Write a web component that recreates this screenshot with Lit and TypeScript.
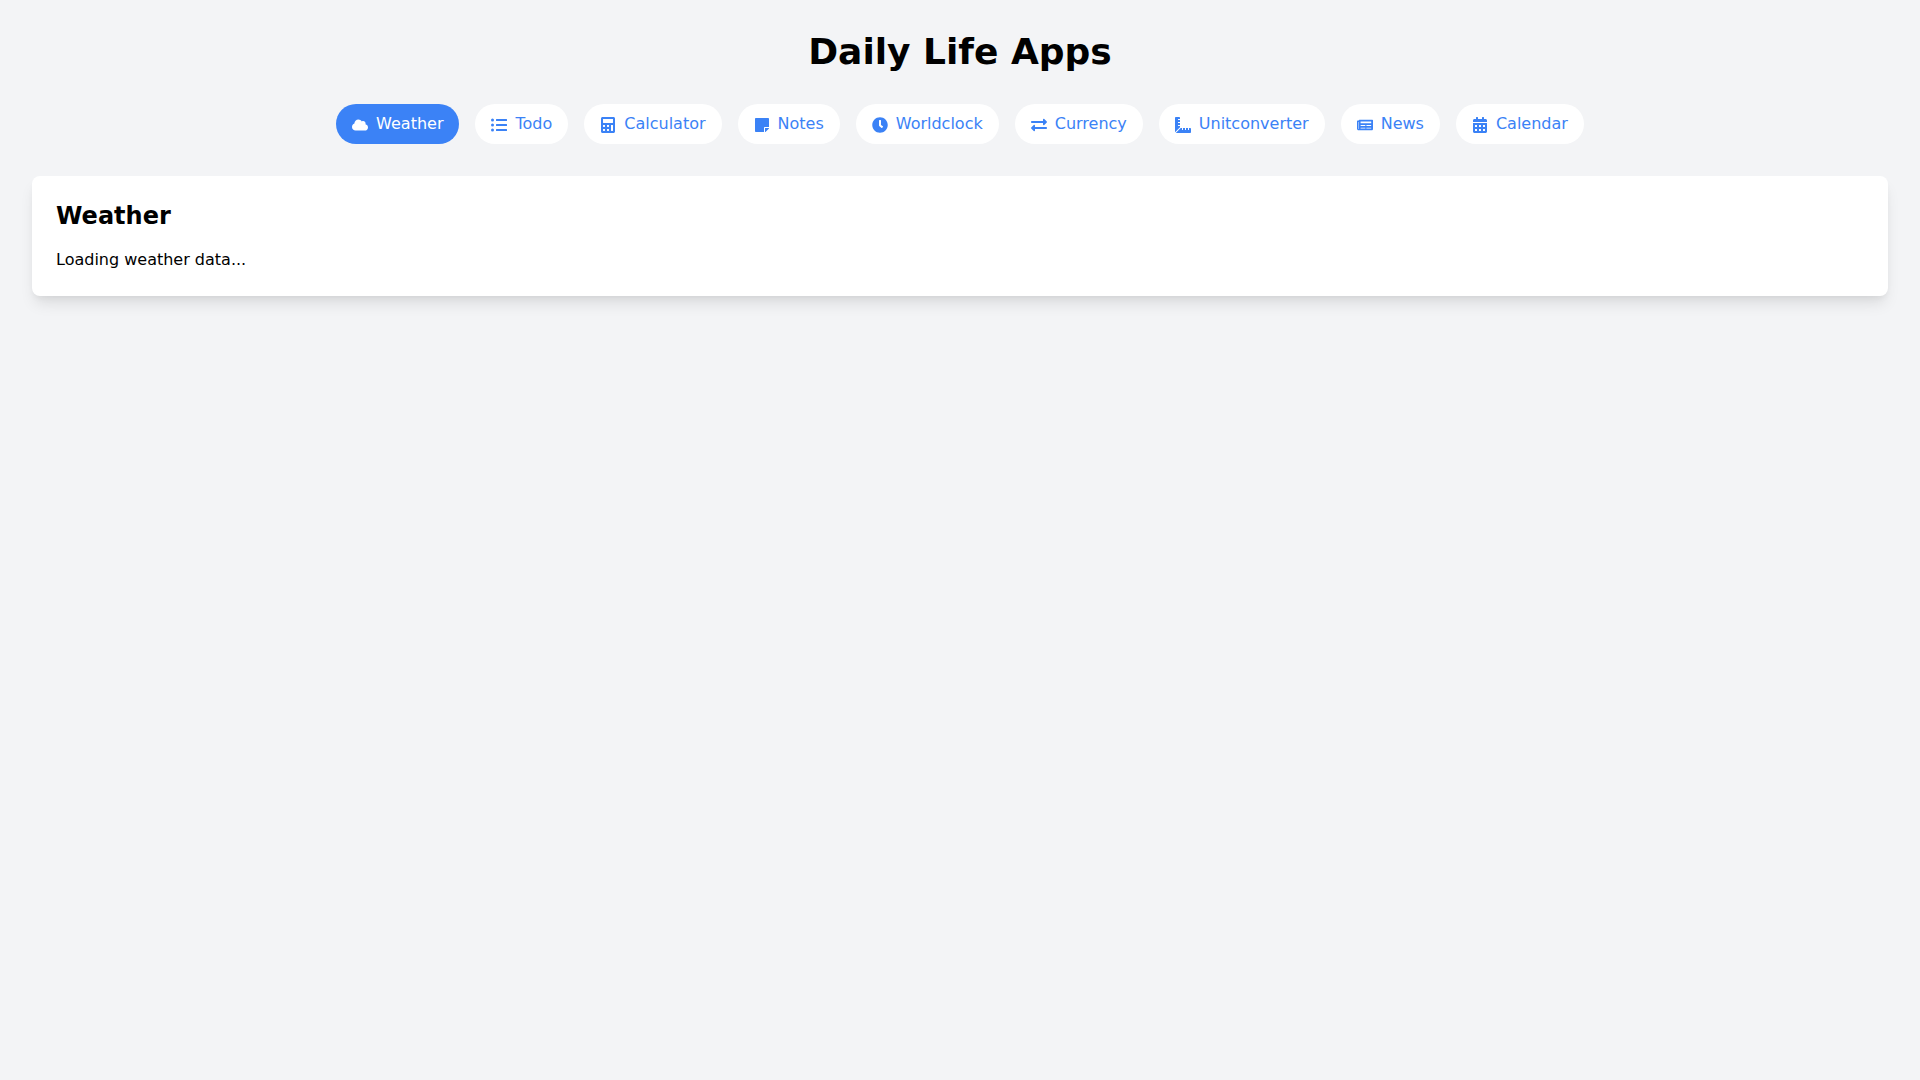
import { LitElement, html, css, svg } from "lit";
import { customElement, state } from "lit/decorators.js";

type Tab = { name: string; label: string; width: number; path: string };

const TABS: Tab[] = [
  {
    name: "weather",
    label: "Weather",
    width: 640,
    path: "M537.6 226.6c4.1-10.7 6.4-22.4 6.4-34.6 0-53-43-96-96-96-19.7 0-38.1 6-53.3 16.2C367 64.2 315.3 32 256 32c-88.4 0-160 71.6-160 160 0 2.7.1 5.4.2 8.1C40.2 219.8 0 273.2 0 336c0 79.5 64.5 144 144 144h368c70.7 0 128-57.3 128-128 0-61.9-44-113.6-102.4-125.4z",
  },
  {
    name: "todo",
    label: "Todo",
    width: 512,
    path: "M48 48a48 48 0 1 0 48 48 48 48 0 0 0-48-48zm0 160a48 48 0 1 0 48 48 48 48 0 0 0-48-48zm0 160a48 48 0 1 0 48 48 48 48 0 0 0-48-48zm448 16H176a16 16 0 0 0-16 16v32a16 16 0 0 0 16 16h320a16 16 0 0 0 16-16v-32a16 16 0 0 0-16-16zm0-320H176a16 16 0 0 0-16 16v32a16 16 0 0 0 16 16h320a16 16 0 0 0 16-16V80a16 16 0 0 0-16-16zm0 160H176a16 16 0 0 0-16 16v32a16 16 0 0 0 16 16h320a16 16 0 0 0 16-16v-32a16 16 0 0 0-16-16z",
  },
  {
    name: "calculator",
    label: "Calculator",
    width: 448,
    path: "M400 0H48C22.4 0 0 22.4 0 48v416c0 25.6 22.4 48 48 48h352c25.6 0 48-22.4 48-48V48c0-25.6-22.4-48-48-48zM128 435.2c0 6.4-6.4 12.8-12.8 12.8H76.8c-6.4 0-12.8-6.4-12.8-12.8v-38.4c0-6.4 6.4-12.8 12.8-12.8h38.4c6.4 0 12.8 6.4 12.8 12.8v38.4zm0-128c0 6.4-6.4 12.8-12.8 12.8H76.8c-6.4 0-12.8-6.4-12.8-12.8v-38.4c0-6.4 6.4-12.8 12.8-12.8h38.4c6.4 0 12.8 6.4 12.8 12.8v38.4zm128 128c0 6.4-6.4 12.8-12.8 12.8h-38.4c-6.4 0-12.8-6.4-12.8-12.8v-38.4c0-6.4 6.4-12.8 12.8-12.8h38.4c6.4 0 12.8 6.4 12.8 12.8v38.4zm0-128c0 6.4-6.4 12.8-12.8 12.8h-38.4c-6.4 0-12.8-6.4-12.8-12.8v-38.4c0-6.4 6.4-12.8 12.8-12.8h38.4c6.4 0 12.8 6.4 12.8 12.8v38.4zm128 128c0 6.4-6.4 12.8-12.8 12.8h-38.4c-6.4 0-12.8-6.4-12.8-12.8V268.8c0-6.4 6.4-12.8 12.8-12.8h38.4c6.4 0 12.8 6.4 12.8 12.8v166.4zm0-256c0 6.4-6.4 12.8-12.8 12.8H76.8c-6.4 0-12.8-6.4-12.8-12.8V76.8C64 70.4 70.4 64 76.8 64h294.4c6.4 0 12.8 6.4 12.8 12.8v102.4z",
  },
  {
    name: "notes",
    label: "Notes",
    width: 448,
    path: "M312 320h136V56c0-13.3-10.7-24-24-24H24C10.7 32 0 42.7 0 56v400c0 13.3 10.7 24 24 24h264V344c0-13.2 10.8-24 24-24zm129 55l-98 98c-4.5 4.5-10.6 7-17 7h-6V352h128v6.1c0 6.3-2.5 12.4-7 16.9z",
  },
  {
    name: "worldclock",
    label: "Worldclock",
    width: 512,
    path: "M256,8C119,8,8,119,8,256S119,504,256,504,504,393,504,256,393,8,256,8Zm92.49,313h0l-20,25a16,16,0,0,1-22.49,2.5h0l-67-49.72a40,40,0,0,1-15-31.23V112a16,16,0,0,1,16-16h32a16,16,0,0,1,16,16V256l58,42.5A16,16,0,0,1,348.49,321Z",
  },
  {
    name: "currency",
    label: "Currency",
    width: 512,
    path: "M0 168v-16c0-13.255 10.745-24 24-24h360V80c0-21.367 25.899-32.042 40.971-16.971l80 80c9.372 9.373 9.372 24.569 0 33.941l-80 80C409.956 271.982 384 261.456 384 240v-48H24c-13.255 0-24-10.745-24-24zm488 152H128v-48c0-21.314-25.862-32.08-40.971-16.971l-80 80c-9.372 9.373-9.372 24.569 0 33.941l80 80C102.057 463.997 128 453.437 128 432v-48h360c13.255 0 24-10.745 24-24v-16c0-13.255-10.745-24-24-24z",
  },
  {
    name: "unitconverter",
    label: "Unitconverter",
    width: 512,
    path: "M160 288h-56c-4.42 0-8-3.58-8-8v-16c0-4.42 3.58-8 8-8h56v-64h-56c-4.42 0-8-3.58-8-8v-16c0-4.42 3.58-8 8-8h56V96h-56c-4.42 0-8-3.58-8-8V72c0-4.42 3.58-8 8-8h56V32c0-17.67-14.33-32-32-32H32C14.33 0 0 14.33 0 32v448c0 2.77.91 5.24 1.57 7.8L160 329.38V288zm320 64h-32v56c0 4.42-3.58 8-8 8h-16c-4.42 0-8-3.58-8-8v-56h-64v56c0 4.42-3.58 8-8 8h-16c-4.42 0-8-3.58-8-8v-56h-64v56c0 4.42-3.58 8-8 8h-16c-4.42 0-8-3.58-8-8v-56h-41.37L24.2 510.43c2.56.66 5.04 1.57 7.8 1.57h448c17.67 0 32-14.33 32-32v-96c0-17.67-14.33-32-32-32z",
  },
  {
    name: "news",
    label: "News",
    width: 576,
    path: "M552 64H88c-13.255 0-24 10.745-24 24v8H24c-13.255 0-24 10.745-24 24v272c0 30.928 25.072 56 56 56h472c26.51 0 48-21.49 48-48V88c0-13.255-10.745-24-24-24zM56 400a8 8 0 0 1-8-8V144h16v248a8 8 0 0 1-8 8zm236-16H140c-6.627 0-12-5.373-12-12v-8c0-6.627 5.373-12 12-12h152c6.627 0 12 5.373 12 12v8c0 6.627-5.373 12-12 12zm208 0H348c-6.627 0-12-5.373-12-12v-8c0-6.627 5.373-12 12-12h152c6.627 0 12 5.373 12 12v8c0 6.627-5.373 12-12 12zm-208-96H140c-6.627 0-12-5.373-12-12v-8c0-6.627 5.373-12 12-12h152c6.627 0 12 5.373 12 12v8c0 6.627-5.373 12-12 12zm208 0H348c-6.627 0-12-5.373-12-12v-8c0-6.627 5.373-12 12-12h152c6.627 0 12 5.373 12 12v8c0 6.627-5.373 12-12 12zm0-96H140c-6.627 0-12-5.373-12-12v-40c0-6.627 5.373-12 12-12h360c6.627 0 12 5.373 12 12v40c0 6.627-5.373 12-12 12z",
  },
  {
    name: "calendar",
    label: "Calendar",
    width: 448,
    path: "M0 464c0 26.5 21.5 48 48 48h352c26.5 0 48-21.5 48-48V192H0v272zm320-196c0-6.6 5.4-12 12-12h40c6.6 0 12 5.4 12 12v40c0 6.6-5.4 12-12 12h-40c-6.6 0-12-5.4-12-12v-40zm0 128c0-6.6 5.4-12 12-12h40c6.6 0 12 5.4 12 12v40c0 6.6-5.4 12-12 12h-40c-6.6 0-12-5.4-12-12v-40zM192 268c0-6.6 5.4-12 12-12h40c6.6 0 12 5.4 12 12v40c0 6.6-5.4 12-12 12h-40c-6.6 0-12-5.4-12-12v-40zm0 128c0-6.6 5.4-12 12-12h40c6.6 0 12 5.4 12 12v40c0 6.6-5.4 12-12 12h-40c-6.6 0-12-5.4-12-12v-40zM64 268c0-6.6 5.4-12 12-12h40c6.6 0 12 5.4 12 12v40c0 6.6-5.4 12-12 12H76c-6.6 0-12-5.4-12-12v-40zm0 128c0-6.6 5.4-12 12-12h40c6.6 0 12 5.4 12 12v40c0 6.6-5.4 12-12 12H76c-6.6 0-12-5.4-12-12v-40zM400 64h-48V16c0-8.8-7.2-16-16-16h-32c-8.8 0-16 7.2-16 16v48H160V16c0-8.8-7.2-16-16-16h-32c-8.8 0-16 7.2-16 16v48H48C21.5 64 0 85.5 0 112v48h448v-48c0-26.5-21.5-48-48-48z",
  },
];

@customElement("app-root")
export class AppRoot extends LitElement {
  @state() active: string = "weather";

  static styles = css`
    :host {
      display: block;
      min-height: 1080px;
      box-sizing: border-box;
      padding: 32px;
      background: #f3f4f6;
      color: #000;
      font-family: "DejaVu Sans", sans-serif;
      font-size: 16px;
      line-height: 24px;
    }

    h1 {
      margin: 0 0 32px;
      font-size: 36px;
      line-height: 40px;
      font-weight: 700;
      text-align: center;
    }

    nav {
      display: flex;
      justify-content: center;
      gap: 16px;
      margin-bottom: 32px;
    }

    button {
      padding: 8px 16px;
      border: 0;
      border-radius: 9999px;
      background: #fff;
      color: #3b82f6;
      font: inherit;
      cursor: pointer;
    }

    button.active {
      background: #3b82f6;
      color: #fff;
    }

    .icon {
      width: 16px;
      height: 16px;
      margin-right: 8px;
      vertical-align: middle;
      fill: currentColor;
    }

    .card {
      padding: 24px;
      background: #fff;
      border-radius: 8px;
      box-shadow: 0 10px 15px -3px rgba(0, 0, 0, 0.1),
        0 4px 6px -2px rgba(0, 0, 0, 0.05);
    }

    h2 {
      margin: 0 0 16px;
      font-size: 24px;
      line-height: 32px;
      font-weight: 700;
    }

    p {
      margin: 0;
    }
  `;

  private renderIcon(tab: Tab) {
    return html`<svg class="icon" viewBox="0 0 ${tab.width} 512" aria-hidden="true">
      ${svg`<path d="${tab.path}"></path>`}
    </svg>`;
  }

  render() {
    return html`
      <h1>Daily Life Apps</h1>
      <nav>
        ${TABS.map(
          (tab) => html`
            <button
              class="${tab.name === this.active ? "active" : ""}"
              @click="${() => (this.active = tab.name)}"
            >
              ${this.renderIcon(tab)}${tab.label}
            </button>
          `
        )}
      </nav>
      <section class="card">
        <h2>Weather</h2>
        <p>Loading weather data...</p>
      </section>
    `;
  }
}

declare global {
  interface HTMLElementTagNameMap {
    "app-root": AppRoot;
  }
}
